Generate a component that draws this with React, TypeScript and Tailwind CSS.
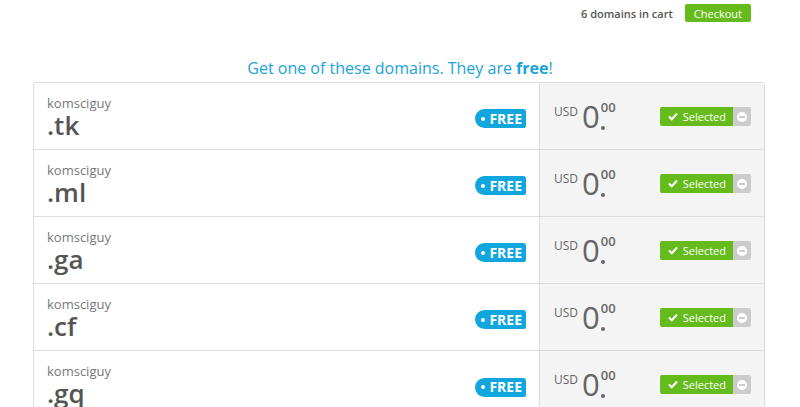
import React from "react";

const tlds = [".tk", ".ml", ".ga", ".cf", ".gq"];

function Row({ tld, last }: { tld: string; last: boolean }) {
  return (
    <div className={`flex h-[67px] ${last ? "" : "border-b border-[#dddddd]"}`}>
      <div className="flex flex-1 items-center justify-between pl-[13px] pr-[13px] border-r border-[#dddddd]">
        <div className="flex flex-col pt-[1px]">
          <span className="text-[13px] leading-[16px] text-[#777]">komsciguy</span>
          <span className="mt-[1px] text-[26px] leading-[27px] font-semibold text-[#555]">{tld}</span>
        </div>
        <div className="mt-[5px] flex h-[19px] items-center rounded-l-[10px] rounded-r-[3px] bg-[#12a6de] pl-[6px] pr-[4px]">
          <span className="mr-[4px] h-[4px] w-[4px] rounded-full bg-white" />
          <span className="text-[14px] font-bold leading-none text-white">FREE</span>
        </div>
      </div>
      <div className="flex w-[224px] items-start bg-[#f4f4f4] pl-[14px] pr-[13px] pt-[19px]">
        <div className="flex items-start text-[#666]">
          <span className="mt-[4px] text-[12px] leading-none">USD</span>
          <span className="ml-[4px] text-[31px] leading-[28px] font-normal">0</span>
          <div className="relative">
            <div className="absolute left-[1px] top-[24px] h-[4px] w-[4px] rounded-full bg-[#666]" />
          </div>
          <span className="ml-[1px] text-[13px] font-semibold leading-none -mt-[1px]">00</span>
        </div>
        <div className="ml-auto mt-[5px] flex h-[19px]">
          <div className="flex items-center rounded-l-[2px] bg-[#66bb1c] pl-[8px] pr-[7px]">
            <svg width="10" height="9" viewBox="0 0 10 9" className="mr-[5px]">
              <path d="M1 4.5 L3.8 7.2 L9 1.5" stroke="white" strokeWidth="2" fill="none" />
            </svg>
            <span className="text-[11px] leading-none text-white">Selected</span>
          </div>
          <div className="flex w-[18px] items-center justify-center rounded-r-[2px] bg-[#cccccc]">
            <div className="flex h-[10px] w-[10px] items-center justify-center rounded-full bg-white">
              <div className="h-[2px] w-[6px] bg-[#cccccc]" />
            </div>
          </div>
        </div>
      </div>
    </div>
  );
}

export default function App() {
  return (
    <div className="h-[407px] w-[800px] overflow-hidden bg-white" style={{ fontFamily: '"Open Sans", sans-serif' }}>
      <div className="flex h-[26px] items-start justify-end pr-[49px] pt-[4px]">
        <span className="mt-[4px] mr-[12px] text-[11px] font-semibold leading-none text-[#555]">6 domains in cart</span>
        <button className="h-[18px] rounded-[2px] bg-[#66bb1c] px-[9px] text-[11px] leading-none text-white">Checkout</button>
      </div>
      <div className="mt-[32px] text-center text-[16px] leading-[20px] text-[#1aa3dc]">
        Get one of these domains. They are <span className="font-bold">free</span>!
      </div>
      <div className="ml-[33px] mt-[4px] w-[732px] rounded-t-[3px] border border-b-0 border-[#dddddd]">
        {tlds.map((t, i) => (
          <Row key={t} tld={t} last={i === tlds.length - 1} />
        ))}
      </div>
    </div>
  );
}
